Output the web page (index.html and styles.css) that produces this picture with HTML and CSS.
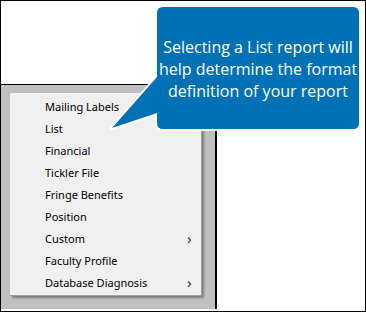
FILE: index.html
```html
<!DOCTYPE html>
<html lang="en">
<head>
  <meta charset="UTF-8">
  <meta name="viewport" content="width=device-width, initial-scale=1.0">
  <title>Report Types</title>
  <link rel="stylesheet" href="styles.css">
</head>
<body>

  <div class="frame">
    <div class="capture">
      <ul class="menu">
        <li class="item">Mailing Labels</li>
        <li class="item">List</li>
        <li class="item">Financial</li>
        <li class="item">Tickler File</li>
        <li class="item">Fringe Benefits</li>
        <li class="item">Position</li>
        <li class="item sub">Custom</li>
        <li class="item">Faculty Profile</li>
        <li class="item sub">Database Diagnosis</li>
      </ul>
    </div>

    <!-- callout bubble drawn over the screenshot -->
    <svg class="bubble" width="366" height="312" viewBox="0 0 366 312">
      <path d="M163,7 H353 Q359,7 359,13 V123 Q359,129 353,129 H163 Q157,129 157,123 V113 L112,128 L157,77 V13 Q157,7 163,7 Z"
            fill="#0071b5" stroke="#fff" stroke-width="4" stroke-linejoin="round" paint-order="stroke"/>
    </svg>
    <p class="bubble-text">Selecting a List report will<br>help determine the format<br>definition of your report</p>
  </div>

</body>
</html>
```

FILE: styles.css
```css
body {
  margin: 0;
  padding: 0;
  background-color: white;
}

.frame {
  position: relative;
  width: 364px;
  height: 310px;
  border: 1px solid black;
  background-color: white;
  overflow: hidden;
}

.capture {
  margin-top: 83px;
  width: 205px;
  height: 216px;
  padding: 8px 0 0 9px;
  background-color: #c0c0c0;
  border-top: 1px solid black;
  border-right: 2px solid black;
}

.menu {
  list-style: none;
  margin: 0;
  padding: 3px 0 1px 0;
  width: 191px;
  background-color: #f0f0f0;
  border-right: 1px solid #a0a0a0;
  border-bottom: 1px solid #a0a0a0;
  box-shadow: 2px 2px 2px rgba(0, 0, 0, 0.35);
}

.item {
  position: relative;
  height: 22px;
  line-height: 22px;
  padding-left: 35px;
  font-family: "Noto Sans", sans-serif;
  font-size: 11px;
  color: #000;
}

.item.sub::after {
  content: "\203A";
  position: absolute;
  left: 177px;
  top: 0;
  font-size: 15px;
  line-height: 20px;
  color: #333;
}

.bubble {
  position: absolute;
  left: -1px;
  top: -1px;
}

.bubble-text {
  position: absolute;
  left: 156px;
  top: 35px;
  width: 202px;
  margin: 0;
  text-align: center;
  font-family: "Open Sans", sans-serif;
  font-size: 16px;
  line-height: 22px;
  color: white;
}
```
